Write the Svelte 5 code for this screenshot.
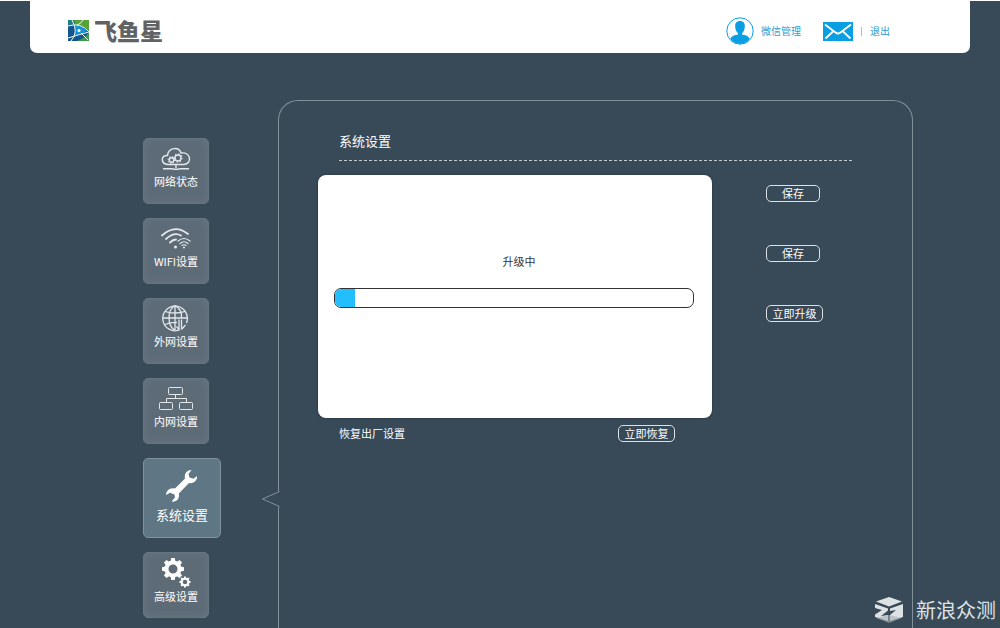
<script lang="ts">
  let active = $state('system');
  let progress = $state(20);

  const items = [
    { id: 'status', label: '网络状态' },
    { id: 'wifi', label: 'WIFI设置' },
    { id: 'wan', label: '外网设置' },
    { id: 'lan', label: '内网设置' },
    { id: 'system', label: '系统设置' },
    { id: 'advanced', label: '高级设置' }
  ];

  const teeth = [0, 45, 90, 135, 180, 225, 270, 315];
</script>

{#snippet gear(x: number, y: number, s: number)}
  <g transform="translate({x} {y}) scale({s})">
    <circle r="6.500" fill="none" stroke="currentColor" stroke-width="4" />
    {#each teeth as angle}
      <path d="M-2.4 -7.500 L-1.8 -11 H1.8 L2.4 -7.500 Z" fill="currentColor" transform="rotate({angle})" />
    {/each}
  </g>
{/snippet}

<div class="page">
  <header class="topbar">
    <a class="brand" href="#home">
      <svg width="21" height="21" viewBox="0 0 21 21" aria-hidden="true">
        <rect width="21" height="21" fill="#12558f" />
        <path d="M6 0H21V11Q15 5 7 5Z" fill="#58a336" />
        <path d="M0 0H6L7 5H0Z" fill="#1f7f86" />
        <path d="M21 12V21H9Q17 18 21 12Z" fill="#3f9a4a" />
        <path d="M6 6Q14 5 19 11Q14 14 6 16Q9 11 6 6Z" fill="#1793d6" />
        <path d="M0 6Q13 2 21 12Q13 14 0 18M4 0Q11 12 3 21M9 5Q13 4 15 0M13 13L20 20" fill="none" stroke="#eef7ef" stroke-width="1" />
        <circle cx="11" cy="10.500" r="1.500" fill="#fff" />
      </svg>
      <span>飞鱼星</span>
    </a>
    <nav class="account">
      <a class="wechat" href="#wechat">
        <svg width="28" height="28" viewBox="0 0 28 28" aria-hidden="true">
          <circle cx="14" cy="14" r="13.2" fill="#fff" stroke="#0a9fe3" />
          <path d="M14 4C10.500 4 9 6.300 9.200 9.500C9.300 12.500 10.300 15 12 16.200V17.500C8.500 18.200 5.500 19 4.300 21.800C6.500 25 10 27 14 27C18 27 21.500 25 23.700 21.800C22.500 19 19.500 18.200 16 17.500V16.200C17.700 15 18.700 12.500 18.800 9.500C19 6.300 17.500 4 14 4Z" fill="#0a9fe3" />
        </svg>
        <span>微信管理</span>
      </a>
      <a class="mail" href="#mail" aria-label="mail">
        <svg width="30" height="19" viewBox="0 0 30 19" aria-hidden="true">
          <rect width="30" height="19" fill="#0a9fe3" />
          <path d="M2 2.500L12.500 10.500Q15 12.500 17.500 10.500L28 2.500M2.500 16.500L10 9.500M27.500 16.500L20 9.500" fill="none" stroke="#fff" stroke-width="1.800" />
        </svg>
      </a>
      <span class="divider"></span>
      <a href="#logout">退出</a>
    </nav>
  </header>

  <div class="body">
    <nav class="menu">
      {#each items as item}
        <button class="tile" class:active={active === item.id} onclick={() => (active = item.id)}>
          {#if item.id === 'status'}
            <svg width="30" height="24" viewBox="0 0 30 24" fill="none" stroke="currentColor" stroke-width="1.400">
              <path d="M7 17.500C-.5 17-.5 8 6.500 8.500C7.500 0 18 -.5 20 6C30 4.500 31.500 17 23 17.500Z" />
              <circle cx="10.500" cy="13" r="2.200" />
              <circle cx="17" cy="11" r="3" />
              <circle cx="10.500" cy="13" r="3.200" stroke-dasharray="1 1.500" />
              <circle cx="17" cy="11" r="4" stroke-dasharray="1.200 1.900" />
              <path d="M15 18V21M2 21.800H12M18 21.800H28M12 22.300H18" />
            </svg>
          {:else if item.id === 'wifi'}
            <svg width="30" height="24" viewBox="0 0 30 24" fill="none" stroke="currentColor" stroke-width="1.800" stroke-linecap="round">
              <path d="M1 8.500Q14-3.500 27 7M5 12Q13 4.500 20 8.500M9 15.500Q12 12.500 15 12.500" />
              <circle cx="14.500" cy="20" r="1.500" fill="currentColor" stroke="none" />
              <path d="M17 14Q23 9 29 14M19 16.500Q23 13 27 16.500M21 18.500Q23 17 25 18.500" stroke-width="1.200" />
              <circle cx="23" cy="20.500" r="1" fill="currentColor" stroke="none" />
            </svg>
          {:else if item.id === 'wan'}
            <svg width="30" height="28" viewBox="0 0 30 28" fill="none" stroke="currentColor" stroke-width="1.300">
              <path d="M19 25.700A12.300 12.300 0 1 1 25.500 19" />
              <path d="M14 1.500V26M2 14H26M4 7.500Q14 10.500 24 7.500M4 20.500Q10 18 16 18.500M14 1.500C6 6 6 22 14 26M14 1.500C20 5 21 10 20.500 14" />
              <path d="M18 25V15.500M20.500 15.500V25M15.500 22.500L18 25.500M20.500 25.500L24.500 21" />
            </svg>
          {:else if item.id === 'lan'}
            <svg width="36" height="24" viewBox="0 0 36 24" fill="none" stroke="currentColor">
              <rect x="10.500" y="0.500" width="14" height="7" rx="1" />
              <rect x="1.500" y="15.500" width="13" height="7" rx="1" />
              <rect x="21.500" y="15.500" width="13" height="7" rx="1" />
              <path d="M17.500 7.500V11M8.500 15.500V11.500H28.500V15.500" />
            </svg>
          {:else if item.id === 'system'}
            <svg width="34" height="34" viewBox="0 0 34 34">
              <path d="M26.500 1C22 .8 19 4.500 20 9.500L10 19.500C5 18.500 1.200 21.500 1 26L5 23.800L9.500 25.500L10 28.500L6.500 32.500C11.500 33.500 15 29.500 13.800 24.500L24 14C28.500 15 32.500 11.500 32 7L28.500 9.800L24.500 8.500L23.500 5Z" fill="currentColor" />
            </svg>
          {:else}
            <svg width="30" height="30" viewBox="0 0 30 30">
              {@render gear(12, 11, 1)}
              {@render gear(24, 24, 0.5)}
            </svg>
          {/if}
          <span>{item.label}</span>
        </button>
      {/each}
    </nav>

    <main class="panel">
      <svg class="notch" width="19" height="18" viewBox="0 0 19 18" aria-hidden="true">
        <path class="gap" d="M17.500 1.500V16.500" />
        <path d="M18.500 1.500L1.500 9L18.500 16.500" />
      </svg>

      <h1>系统设置</h1>
      <div class="rule"></div>

      <div class="rows">
        <div class="row"><button class="pill">保存</button></div>
        <div class="row"><button class="pill">保存</button></div>
        <div class="row"><button class="pill wide">立即升级</button></div>
        <div class="row reset">
          <span>恢复出厂设置</span>
          <button class="pill wide">立即恢复</button>
        </div>

        <div class="dialog" role="dialog" aria-labelledby="upgrade-label">
          <p id="upgrade-label">升级中</p>
          <div class="progress" role="progressbar" aria-valuenow={progress} aria-labelledby="upgrade-label">
            <div class="bar" style="width: {progress}px"></div>
          </div>
        </div>
      </div>
    </main>
  </div>

  <div class="watermark">
    <svg width="28" height="26" viewBox="0 0 28 26" aria-hidden="true">
      <path d="M14 0L27 4.500L14 9.500L1 4.500Z" fill="#dde2e5" />
      <path d="M0 7L13 11.500V13.500L6 19L13 18V24L0 20V17.500L7 13L0 11Z" fill="#dde2e5" />
      <path d="M15 11.500L28 7V20L15 24V18L21 13L15 14Z" fill="#dde2e5" />
      <path d="M1 21L14 18L27 21L14 26Z" fill="#a5afb6" opacity="0.6" />
    </svg>
    <span>新浪众测</span>
  </div>
</div>

<style>
  :global(body) {
    margin: 0;
    background: #384957;
  }

  .page {
    position: relative;
    box-sizing: border-box;
    height: 100vh;
    overflow: hidden;
    display: flex;
    flex-direction: column;
    border-top: 1px solid #fff;
    background: #384957;
    color: #fff;
    font-family: "Noto Sans CJK SC", sans-serif;
    font-size: 11px;
    line-height: 16px;
  }

  a {
    color: #2f9bd3;
    text-decoration: none;
  }

  button {
    font-family: inherit;
    color: inherit;
    cursor: pointer;
  }

  svg {
    display: block;
    flex: none;
  }

  .topbar {
    flex: none;
    display: flex;
    align-items: center;
    justify-content: space-between;
    box-sizing: border-box;
    height: 52px;
    margin: 0 30px;
    padding: 8px 80px 0 38px;
    background: #fff;
    border-radius: 0 0 7px 7px;
  }

  .brand {
    display: flex;
    align-items: center;
    gap: 5px;
    padding-bottom: 2px;
    color: #616264;
    font-size: 23px;
    font-weight: 900;
    line-height: 24px;
  }

  .account {
    display: flex;
    align-items: center;
    font-size: 10px;
  }

  .wechat {
    display: flex;
    align-items: center;
    gap: 7px;
    margin-right: 22px;
  }

  .divider {
    width: 1px;
    height: 9px;
    margin: 0 8px;
    background: #8cc8e8;
  }

  .body {
    flex: 1;
    display: flex;
    min-height: 0;
    padding: 47px 87px 0 143px;
  }

  .menu {
    flex: none;
    display: flex;
    flex-direction: column;
    align-items: flex-start;
    gap: 14px;
    width: 78px;
    margin-right: 57px;
    padding-top: 38px;
  }

  .tile {
    flex: none;
    display: flex;
    flex-direction: column;
    align-items: center;
    justify-content: space-between;
    box-sizing: border-box;
    width: 66px;
    height: 66px;
    padding: 8px 0 14px;
    border: 1px solid #667681;
    border-radius: 5px;
    background: #5d6b77;
    box-shadow: inset 0 0 8px #667782;
    font-size: 11px;
    line-height: 16px;
    white-space: nowrap;
  }

  .tile:nth-child(3),
  .tile:last-child {
    padding-top: 5px;
  }

  .tile svg {
    color: #e4e8eb;
  }

  .tile.active {
    width: 78px;
    height: 80px;
    padding: 10px 0 12px;
    border-color: #7f929e;
    background: #5f7684;
    box-shadow: none;
    font-size: 13px;
    line-height: 20px;
  }

  .tile.active svg,
  .tile:last-child svg {
    color: #fff;
  }

  .panel {
    position: relative;
    flex: 1;
    box-sizing: border-box;
    min-width: 0;
    padding: 30px 60px 0;
    border: 1px solid #82909a;
    border-bottom: none;
    border-radius: 20px 20px 0 0;
  }

  .notch {
    position: absolute;
    left: -18px;
    top: 389px;
  }

  .notch path {
    fill: none;
    stroke: #82909a;
  }

  .notch .gap {
    stroke: #384957;
    stroke-width: 3;
  }

  h1 {
    margin: 0;
    font-size: 13px;
    font-weight: 400;
    line-height: 20px;
  }

  .rule {
    height: 1px;
    margin-top: 9px;
    background: repeating-linear-gradient(90deg, #c3cad0 0 3px, transparent 3px 5px);
  }

  .rows {
    position: relative;
    padding-top: 2px;
  }

  .row {
    display: flex;
    align-items: center;
    height: 60px;
    padding-left: calc(100% - 86px);
  }

  .row.reset {
    gap: 213px;
    margin-top: 60px;
    padding-left: 0;
  }

  .pill {
    flex: none;
    box-sizing: border-box;
    width: 54px;
    height: 17px;
    padding: 0;
    border: 1px solid #dce1e5;
    border-radius: 5px;
    background: none;
    font-size: 11px;
    line-height: 15px;
  }

  .pill.wide {
    width: 57px;
  }

  /* covers the settings rows while the firmware is being written */
  .dialog {
    position: absolute;
    top: 14px;
    left: -21px;
    box-sizing: border-box;
    width: 394px;
    height: 243px;
    padding: 78px 18px 0 16px;
    border-radius: 8px;
    background: #fff;
    color: #333;
    box-shadow: 0 0 2px #202b34;
  }

  .dialog p {
    margin: 0 0 19px;
    padding-left: 10px;
    text-align: center;
  }

  .progress {
    box-sizing: border-box;
    height: 20px;
    overflow: hidden;
    border: 1px solid #333;
    border-radius: 7px;
  }

  .bar {
    height: 100%;
    background: #22befe;
  }

  .watermark {
    position: absolute;
    right: 4px;
    bottom: 5px;
    display: flex;
    align-items: center;
    gap: 12px;
    color: #dde2e5;
    font-size: 20px;
    line-height: 26px;
  }

  .watermark svg {
    margin-right: 1px;
  }
</style>
